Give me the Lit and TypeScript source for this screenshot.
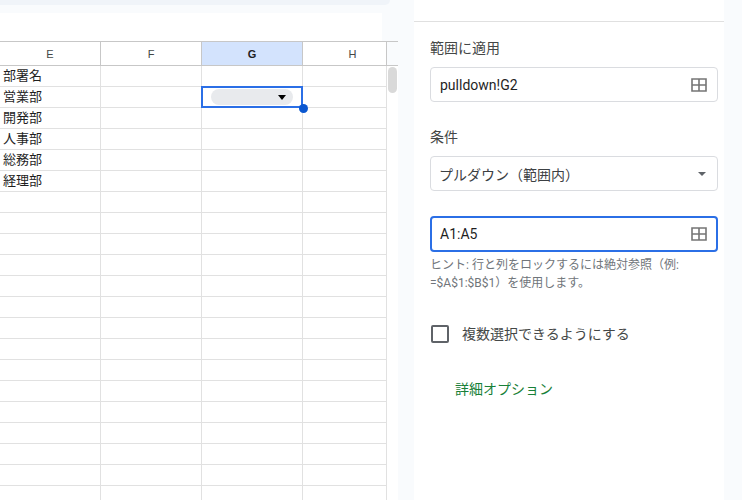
import { LitElement, html, css } from "lit";
import { customElement } from "lit/decorators.js";

const COLUMNS = ["E", "F", "G", "H"];
const DEPARTMENTS = ["部署名", "営業部", "開発部", "人事部", "総務部", "経理部"];
const ROW_COUNT = 21;

const rangeIcon = html`
  <svg class="range-icon" width="16" height="14" viewBox="0 0 16 14">
    <path
      d="M1 1h14v12H1zM8 1v12M1 7h14"
      fill="none"
      stroke="#757575"
      stroke-width="1.6"
    />
  </svg>
`;

@customElement("app-root")
export class AppRoot extends LitElement {
  static styles = css`
    :host {
      display: flex;
      width: 742px;
      height: 500px;
      overflow: hidden;
      background: #f9fbfd;
      font-family: "Roboto", "Noto Sans CJK JP", sans-serif;
      color: #1f1f1f;
    }
    .sheet {
      width: 398px;
      flex: none;
      display: flex;
      flex-direction: column;
    }
    .top-bar {
      width: 390px;
      height: 5px;
      flex: none;
      background: #f0f4f9;
      border-bottom-right-radius: 8px;
    }
    .toolbar-gap {
      width: 382px;
      height: 28px;
      flex: none;
      margin-top: 8px;
      background: #fff;
    }
    .grid {
      position: relative;
      flex: 1;
      display: grid;
      grid-template-columns: 101px 101px 101px 84px 11px;
      grid-template-rows: 25px;
      grid-auto-rows: 21px;
      align-content: start;
      background: #fff;
    }
    .head {
      box-sizing: border-box;
      display: flex;
      align-items: center;
      justify-content: center;
      border-top: 1px solid #c7c7c7;
      border-bottom: 1px solid #c7c7c7;
      border-right: 1px solid #c7c7c7;
      font-size: 11px;
      color: #444746;
      font-family: "Liberation Sans", sans-serif;
    }
    .head.active {
      background: #d3e3fd;
      color: #1f1f1f;
      font-weight: 700;
    }
    /* column H runs on under the scrollbar, so its letter sits right of centre */
    .head.clipped {
      padding-left: 16px;
    }
    .head.corner {
      background: #f9fbfd;
      border-right: none;
    }
    .cell {
      box-sizing: border-box;
      border-right: 1px solid #e1e1e1;
      border-bottom: 1px solid #e1e1e1;
      padding-left: 3px;
      font-size: 13px;
      line-height: 20px;
      white-space: nowrap;
    }
    .gutter {
      background: #fff;
    }
    .thumb {
      position: absolute;
      left: 388px;
      top: 26px;
      width: 9px;
      height: 26px;
      border-radius: 5px;
      background: #d9d9d9;
    }
    .selection {
      position: absolute;
      left: 201px;
      top: 45px;
      width: 102px;
      height: 22px;
      box-sizing: border-box;
      border: 2px solid #2b6fe6;
      display: flex;
      align-items: center;
      padding-left: 8px;
    }
    .chip {
      width: 82px;
      height: 16px;
      border-radius: 8px;
      background: #e8eaed;
      display: flex;
      align-items: center;
      justify-content: flex-end;
      padding-right: 7px;
      box-sizing: border-box;
    }
    .chip-arrow {
      width: 0;
      height: 0;
      border-left: 4px solid transparent;
      border-right: 4px solid transparent;
      border-top: 5px solid #000;
    }
    .handle {
      position: absolute;
      right: -6.5px;
      bottom: -6.5px;
      width: 9px;
      height: 9px;
      box-sizing: border-box;
      border-radius: 50%;
      background: #0b57d0;
    }
    .panel {
      width: 310px;
      flex: none;
      margin-left: 16px;
      background: #fff;
      display: flex;
      flex-direction: column;
      box-sizing: border-box;
    }
    .panel-head {
      height: 22px;
      flex: none;
      box-sizing: border-box;
      border-bottom: 1px solid #e0e0e0;
    }
    .panel-body {
      display: flex;
      flex-direction: column;
      padding: 16px 6px 0 16px;
    }
    .label {
      font-size: 14px;
      line-height: 20px;
      color: #444746;
      margin-bottom: 9px;
    }
    .field {
      box-sizing: border-box;
      height: 35px;
      border: 1px solid #dadce0;
      border-radius: 4px;
      display: flex;
      align-items: center;
      justify-content: space-between;
      padding: 0 10px 0 9px;
      font-size: 14px;
      color: #1f1f1f;
    }
    .field.range {
      margin-bottom: 25px;
    }
    .field.select {
      color: #3c4043;
      margin-bottom: 25px;
    }
    .field.select span {
      margin-left: -1px;
    }
    .field.focused {
      height: 36px;
      border: 2px solid #2b6fe6;
      padding: 0 9px 0 8px;
    }
    .select-arrow {
      width: 0;
      height: 0;
      margin-right: 1px;
      border-left: 4px solid transparent;
      border-right: 4px solid transparent;
      border-top: 4px solid #5f6368;
    }
    .hint {
      margin-top: 4px;
      font-size: 12px;
      line-height: 18px;
      color: #70757a;
    }
    .check-row {
      display: flex;
      align-items: center;
      gap: 13px;
      margin-top: 32px;
      padding-left: 1px;
      font-size: 14px;
      line-height: 20px;
      color: #444746;
    }
    .checkbox {
      box-sizing: border-box;
      width: 18px;
      height: 18px;
      border: 2px solid #5f6368;
      border-radius: 2px;
    }
    .link {
      margin-top: 35px;
      padding-left: 25px;
      font-size: 14px;
      line-height: 20px;
      color: #188038;
    }
    .right-edge {
      flex: 1;
    }
  `;

  renderRows() {
    const rows = [];
    for (let r = 0; r < ROW_COUNT; r++) {
      rows.push(html`
        <div class="cell">${DEPARTMENTS[r] ?? ""}</div>
        <div class="cell"></div>
        <div class="cell"></div>
        <div class="cell"></div>
        <div class="gutter"></div>
      `);
    }
    return rows;
  }

  render() {
    return html`
      <div class="sheet">
        <div class="top-bar"></div>
        <div class="toolbar-gap"></div>
        <div class="grid">
          ${COLUMNS.map(
            (c) =>
              html`<div
                class="head ${c === "G" ? "active" : ""} ${c === "H"
                  ? "clipped"
                  : ""}"
              >
                ${c}
              </div>`
          )}
          <div class="head corner"></div>
          ${this.renderRows()}
          <div class="thumb"></div>
          <div class="selection">
            <div class="chip"><div class="chip-arrow"></div></div>
            <div class="handle"></div>
          </div>
        </div>
      </div>
      <div class="panel">
        <div class="panel-head"></div>
        <div class="panel-body">
          <div class="label">範囲に適用</div>
          <div class="field range"><span>pulldown!G2</span>${rangeIcon}</div>
          <div class="label">条件</div>
          <div class="field select">
            <span>プルダウン（範囲内）</span>
            <div class="select-arrow"></div>
          </div>
          <div class="field focused"><span>A1:A5</span>${rangeIcon}</div>
          <div class="hint">
            ヒント: 行と列をロックするには絶対参照（例:<br />=$A$1:$B$1）を使用します。
          </div>
          <div class="check-row">
            <div class="checkbox"></div>
            <span>複数選択できるようにする</span>
          </div>
          <div class="link">詳細オプション</div>
        </div>
      </div>
      <div class="right-edge"></div>
    `;
  }
}
